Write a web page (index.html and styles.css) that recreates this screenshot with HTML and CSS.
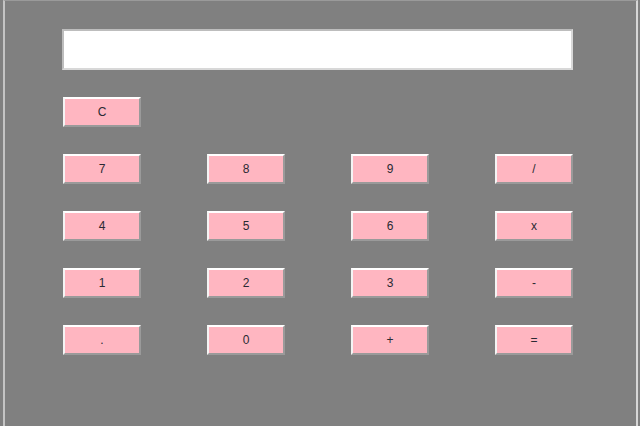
FILE: index.html
```html
<!DOCTYPE html>
<html>
<head>
<meta charset="utf-8">
<link rel="stylesheet" href="styles.css">
</head>
<body>
<div class="frame">
  <div class="calc">
    <div class="display"></div>
    <div class="keys">
      <button class="key">C</button>
      <span class="blank"></span><span class="blank"></span><span class="blank"></span>
      <button class="key">7</button>
      <button class="key">8</button>
      <button class="key">9</button>
      <button class="key">/</button>
      <button class="key">4</button>
      <button class="key">5</button>
      <button class="key">6</button>
      <button class="key">x</button>
      <button class="key">1</button>
      <button class="key">2</button>
      <button class="key">3</button>
      <button class="key">-</button>
      <button class="key">.</button>
      <button class="key">0</button>
      <button class="key">+</button>
      <button class="key">=</button>
    </div>
  </div>
</div>
</body>
</html>
```
FILE: styles.css
```css
html, body {
  margin: 0;
  padding: 0;
  height: 100%;
  background: #808080;
  overflow: hidden;
}
body {
  display: flex;
}
.frame {
  margin-left: 3px;
  width: 635px;
  height: 426px;
  border-left: 2px solid #c4c4c4;
  border-right: 2px solid #d6d6d6;
  border-top: 1px solid #9a9a9a;
  box-sizing: border-box;
  background: #808080;
}
.calc {
  padding: 28px 0 0 57px;
  display: flex;
  flex-direction: column;
  gap: 27px;
}
.display {
  width: 511px;
  height: 41px;
  box-sizing: border-box;
  background: #fff;
  border: 2px solid #bdbdbd;
  border-right-color: #d8d8d8;
  border-bottom-color: #d8d8d8;
}
.keys {
  display: grid;
  grid-template-columns: repeat(4, 78px);
  grid-auto-rows: 30px;
  column-gap: 66px;
  row-gap: 27px;
  margin-left: 1px;
}
.key {
  margin: 0;
  padding: 0;
  background: #ffb6c1;
  border: 2px solid;
  border-color: #ffffff #9a9a9a #9a9a9a #f4f4f4;
  font-family: "Liberation Sans", Arial, sans-serif;
  font-size: 12px;
  color: #2a2a33;
  cursor: default;
}
```
